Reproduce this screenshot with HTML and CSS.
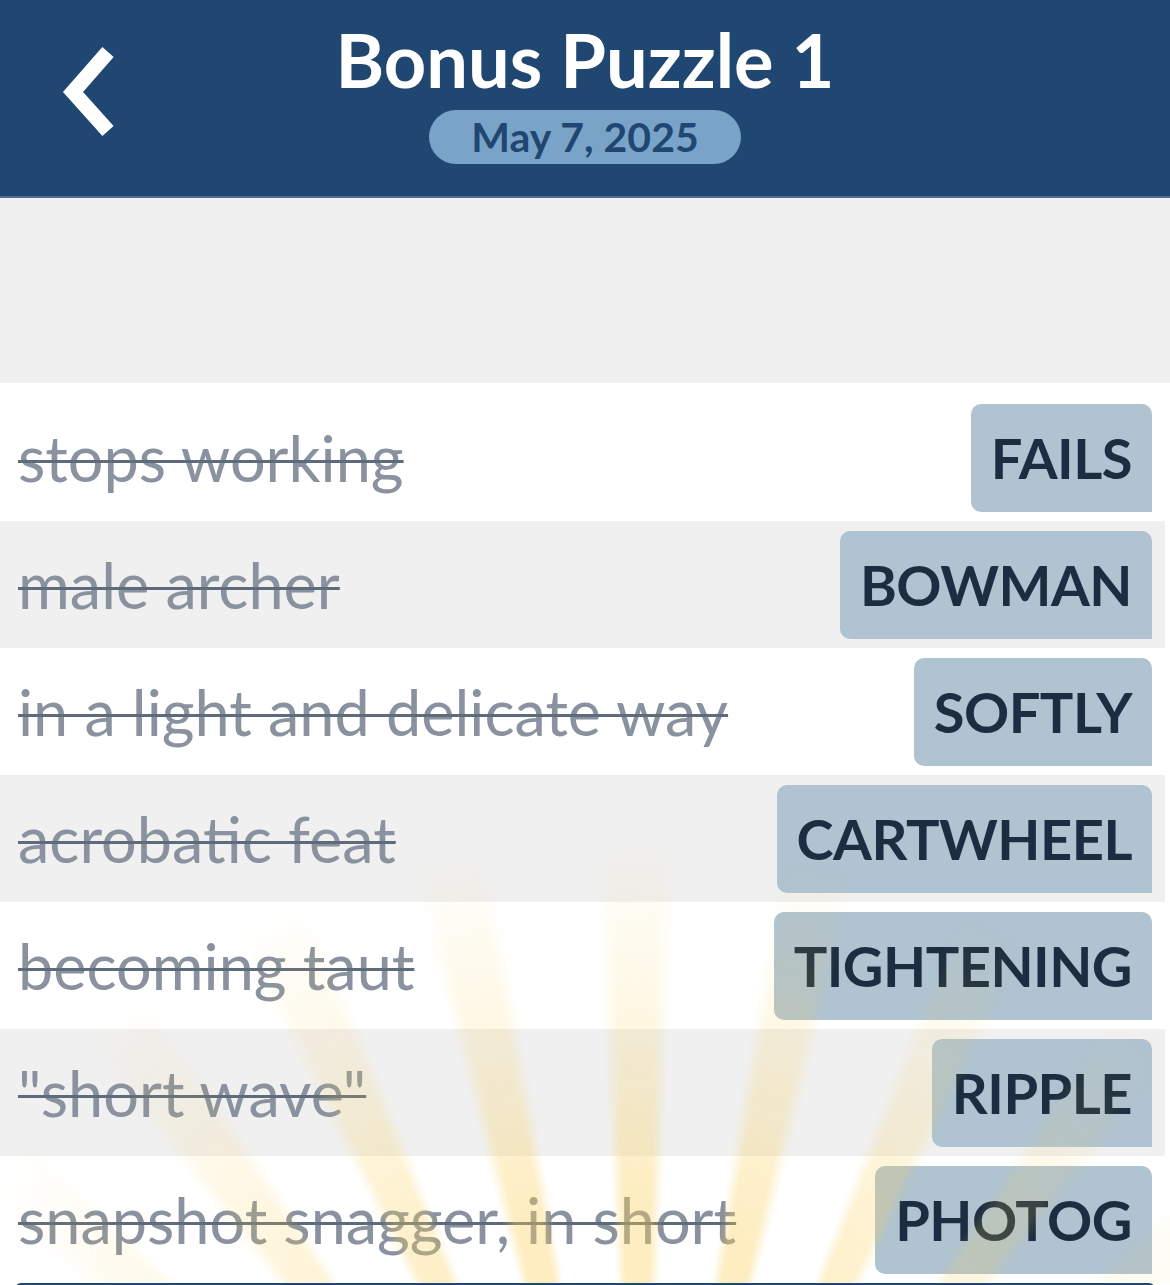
FILE: index.html
```html
<!DOCTYPE html>
<html lang="en">
<head>
  <meta charset="UTF-8">
  <meta name="viewport" content="width=device-width,initial-scale=1.0">
  <title>Bonus Puzzle 1</title>
  <link rel="stylesheet" href="styles.css">
</head>
<body>
  <!-- top bar -->
  <header class="topbar">
    <a class="back" href="#" aria-label="Back">
      <svg width="100" height="120" viewBox="0 0 100 120">
        <polyline points="68,22 33,62 68,101" fill="none" stroke="#fff" stroke-width="15" stroke-linejoin="miter"/>
      </svg>
    </a>
    <div class="title-block">
      <h1 class="title">Bonus Puzzle 1</h1>
      <span class="date-pill">May 7, 2025</span>
    </div>
    <div></div>
  </header>

  <div class="spacer"></div>

  <div class="clue-list">
    <div class="clue-row">
      <span class="clue">stops working</span>
      <span class="answer">FAILS</span>
    </div>
    <div class="clue-row">
      <span class="clue">male archer</span>
      <span class="answer">BOWMAN</span>
    </div>
    <div class="clue-row">
      <span class="clue">in a light and delicate way</span>
      <span class="answer">SOFTLY</span>
    </div>
    <div class="clue-row">
      <span class="clue">acrobatic feat</span>
      <span class="answer">CARTWHEEL</span>
    </div>
    <div class="clue-row">
      <span class="clue">becoming taut</span>
      <span class="answer">TIGHTENING</span>
    </div>
    <div class="clue-row">
      <span class="clue">"short wave"</span>
      <span class="answer">RIPPLE</span>
    </div>
    <div class="clue-row">
      <span class="clue">snapshot snagger, in short</span>
      <span class="answer">PHOTOG</span>
    </div>
    <!-- sunburst over the bottom rows -->
    <div class="rays"></div>
  </div>

  <div class="footer-bar"></div>
</body>
</html>
```

FILE: styles.css
```css
body {
  margin: 0;
  padding: 0;
  font-family: 'Lato', 'Noto Sans', sans-serif;
  background: #fff;
  height: 1285px;
  overflow: hidden;
}

.topbar {
  height: 198px;
  box-sizing: border-box;
  background: #1f4771;
  border-bottom: 2px solid #4d6d8b;
  display: grid;
  grid-template-columns: 1fr auto 1fr;
  align-items: start;
}
.back {
  display: block;
  margin: 30px 0 0 40px;
  width: 100px;
}
.back svg {
  display: block;
}
.title-block {
  display: flex;
  flex-direction: column;
  align-items: center;
  padding-top: 23px;
}
.title {
  margin: 0;
  font-size: 74px;
  line-height: 74px;
  font-weight: bold;
  color: #fff;
}
.date-pill {
  margin-top: 13px;
  height: 54px;
  line-height: 54px;
  padding: 0 42px;
  border-radius: 27px;
  background: #7aa3c8;
  color: #1f4771;
  font-size: 41px;
  font-weight: bold;
}

.spacer {
  height: 185px;
  background: #f0f0f0;
}

.clue-list {
  position: relative;
  background: #fff;
  padding-top: 11px;
}
.clue-row {
  height: 127px;
  margin-right: 5px;
  padding: 0 13px 0 18px;
  display: flex;
  align-items: center;
  justify-content: space-between;
}
.clue-row:nth-child(even) {
  background: #f0f0f0;
}
.clue {
  font-size: 63px;
  color: #89929e;
  text-decoration: line-through;
  text-decoration-color: #5e6b7a;
  text-decoration-thickness: 3px;
}
.answer {
  height: 108px;
  display: flex;
  align-items: center;
  padding: 0 20px;
  border-radius: 10px 10px 0 10px;
  background: #afc3d1;
  color: #1b2d40;
  font-size: 56px;
  font-weight: bold;
  letter-spacing: -0.5px;
}

.rays {
  position: absolute;
  left: 0;
  right: 0;
  bottom: 0;
  height: 480px;
  pointer-events: none;
  background: repeating-conic-gradient(from -3.05deg at 640px 930px,
    rgba(250, 208, 90, 0) 0deg,
    rgba(250, 208, 90, 0.38) 1.3deg,
    rgba(250, 208, 90, 0.38) 4.2deg,
    rgba(250, 208, 90, 0) 5.5deg,
    rgba(250, 208, 90, 0) 12deg);
  -webkit-mask-image: radial-gradient(ellipse 640px 450px at 620px 100%, #000 20%, rgba(0, 0, 0, 0.45) 60%, transparent 100%);
  mask-image: radial-gradient(ellipse 640px 450px at 620px 100%, #000 20%, rgba(0, 0, 0, 0.45) 60%, transparent 100%);
}

.footer-bar {
  height: 6px;
  margin: 0 15px;
  background: #1f4771;
  border-radius: 6px 6px 0 0;
}
```
